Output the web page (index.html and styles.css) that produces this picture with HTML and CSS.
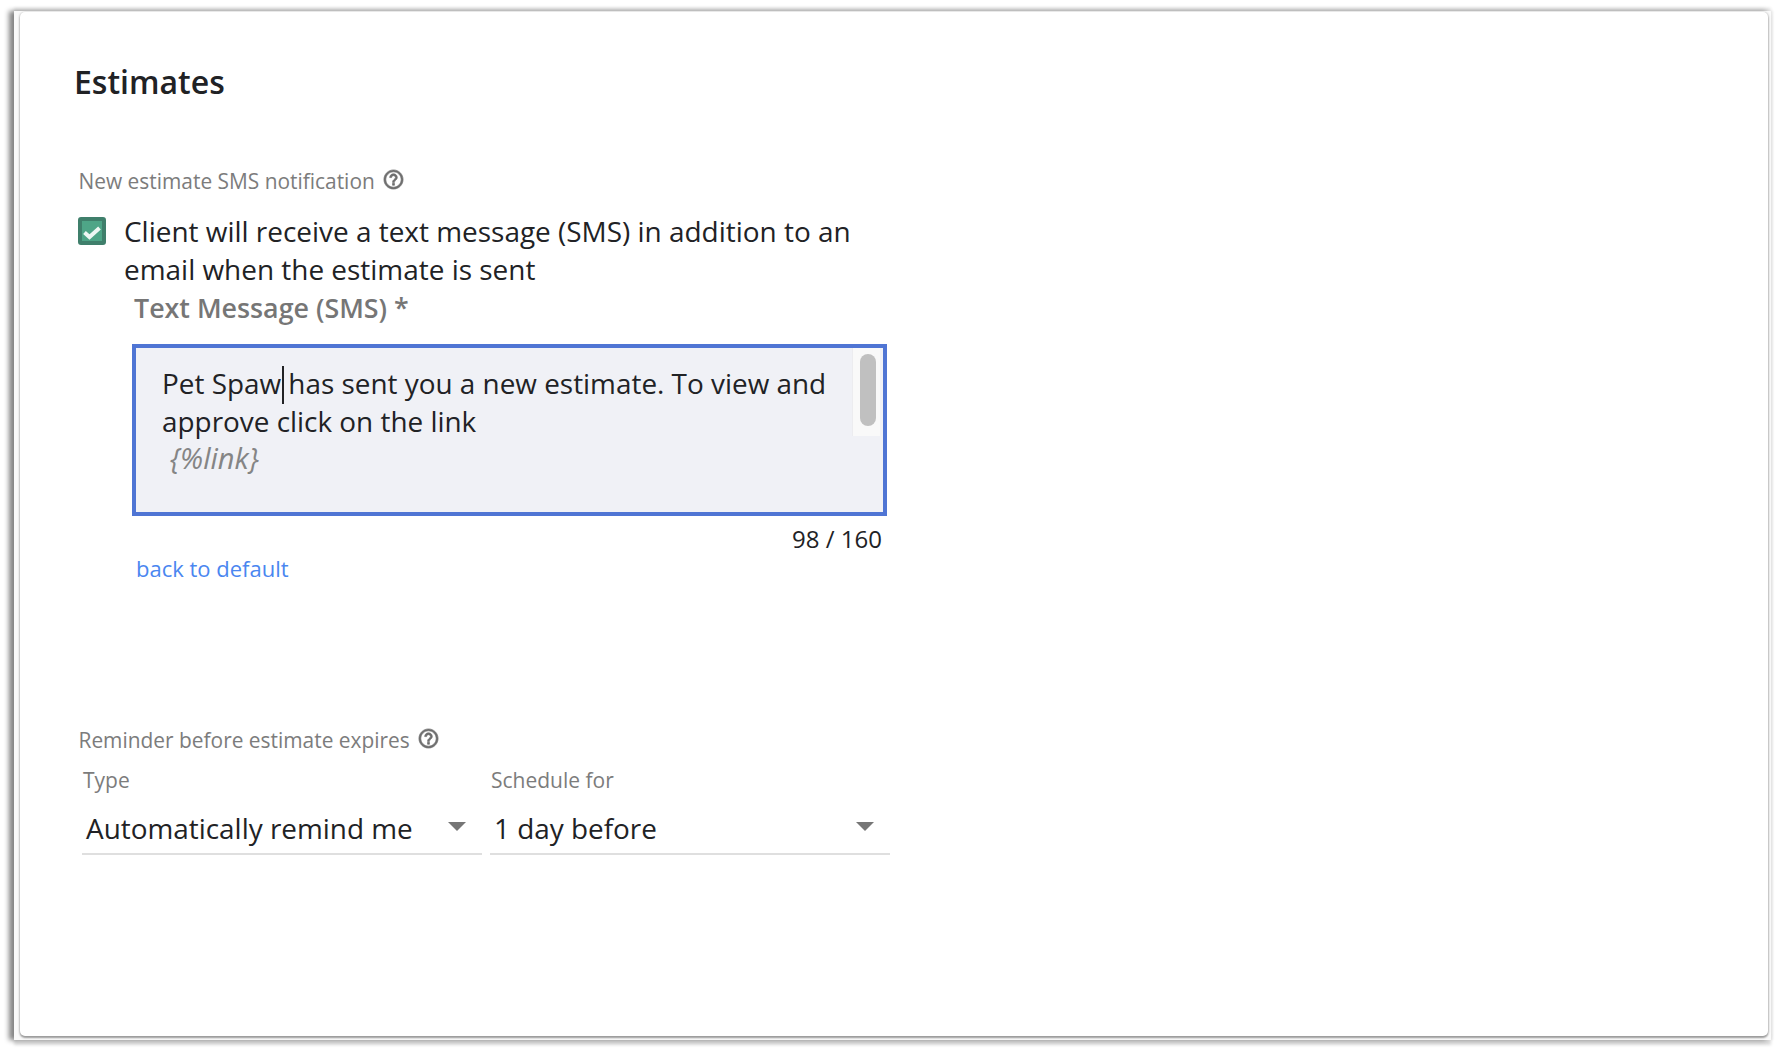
FILE: index.html
```html
<!DOCTYPE html>
<html lang="en">
<head>
<meta charset="utf-8">
<title>Estimates</title>
<link rel="stylesheet" href="styles.css">
</head>
<body>
<div class="frame">
  <main class="card">
    <h1 class="title">Estimates</h1>
    <div class="section-label">
      <span>New estimate SMS notification</span>
      <svg class="help" viewBox="0 0 24 24"><path d="M11 18h2v-2h-2v2zm1-16C6.48 2 2 6.48 2 12s4.48 10 10 10 10-4.48 10-10S17.52 2 12 2zm0 18c-4.41 0-8-3.59-8-8s3.59-8 8-8 8 3.59 8 8-3.59 8-8 8zm0-14c-2.21 0-4 1.79-4 4h2c0-1.1.9-2 2-2s2 .9 2 2c0 2-3 1.75-3 5h2c0-2.25 3-2.5 3-5 0-2.21-1.79-4-4-4z"/></svg>
    </div>
    <div class="check-row">
      <span class="checkbox">
        <svg viewBox="0 0 20 20"><path d="M2.5 11.5l5 4.5 10-9" /></svg>
      </span>
      <p class="check-text">Client will receive a text message (SMS) in addition to an email when the estimate is sent</p>
    </div>
    <div class="sms">
      <div class="sms-label">Text Message (SMS) *</div>
      <div class="textarea">
        <p class="textarea-text">Pet Spaw<span class="caret"></span> has sent you a new estimate. To view and approve click on the link</p>
        <p class="textarea-token">{%link}</p>
        <div class="scroll-track"><div class="scroll-thumb"></div></div>
      </div>
      <div class="counter">98 / 160</div>
      <a class="reset" href="#">back to default</a>
    </div>
    <div class="section-label reminder">
      <span>Reminder before estimate expires</span>
      <svg class="help" viewBox="0 0 24 24"><path d="M11 18h2v-2h-2v2zm1-16C6.48 2 2 6.48 2 12s4.48 10 10 10 10-4.48 10-10S17.52 2 12 2zm0 18c-4.41 0-8-3.59-8-8s3.59-8 8-8 8 3.59 8 8-3.59 8-8 8zm0-14c-2.21 0-4 1.79-4 4h2c0-1.1.9-2 2-2s2 .9 2 2c0 2-3 1.75-3 5h2c0-2.25 3-2.5 3-5 0-2.21-1.79-4-4-4z"/></svg>
    </div>
    <div class="selects">
      <div class="select">
        <div class="select-label">Type</div>
        <div class="select-value"><span>Automatically remind me</span><i class="arrow"></i></div>
      </div>
      <div class="select">
        <div class="select-label">Schedule for</div>
        <div class="select-value"><span>1 day before</span><i class="arrow"></i></div>
      </div>
    </div>
  </main>
</div>
</body>
</html>
```
FILE: styles.css
```css
* { box-sizing: border-box; }
html, body { margin: 0; height: 100%; }
body {
  background: #fff;
  padding: 11px 7px 8px 14px;
  font-family: "Open Sans", "Noto Sans", sans-serif;
  color: #212225;
  overflow: hidden;
}
.frame {
  height: 100%;
  padding: 1px 3px 4px 6px;
  background: #fafafa;
  box-shadow: -5px 0 5px #858585, 0 -3px 3px #e4e4e4, 0 5px 3px #dcdcdc, 2px 0 2px #ececec;
}
.card {
  height: 100%;
  background: #fff;
  border-radius: 5px;
  padding: 49px 0 0 55px;
  box-shadow: 0 2px 2px #9a9a9a, -1px 0 2px #d8d8d8, 1px 0 2px #d0d0d0;
}
.title {
  margin: 0 0 0 -1px;
  font-size: 32px;
  line-height: 42px;
  font-weight: 600;
}
.section-label {
  display: flex;
  align-items: center;
  gap: 7px;
  margin: 63px 0 0 3.5px;
  height: 30px;
  font-size: 20.9px;
  color: #7c7c7c;
}
.help {
  width: 23px;
  height: 23px;
  margin-top: -3px;
  fill: #6f6f6f;
  stroke: #6f6f6f;
  stroke-width: 0.7;
}
.check-row {
  display: flex;
  gap: 18px;
  margin: 16px 0 0 3px;
}
.checkbox {
  flex: none;
  width: 28px;
  height: 28px;
  margin-top: 5px;
  border-radius: 3px;
  border: 4px solid #3f7f6b;
  background: #4ea587;
  display: flex;
}
.checkbox svg { width: 100%; height: 100%; fill: none; stroke: #eef7f3; stroke-width: 4; }
.check-text {
  margin: 0;
  width: 750px;
  font-size: 27.95px;
  line-height: 38px;
}
.sms { margin: 1px 0 0 57px; width: 755px; }
.sms-label {
  margin-left: 2px;
  height: 38px;
  line-height: 38px;
  font-size: 26.8px;
  font-weight: 600;
  color: #767676;
}
.textarea {
  position: relative;
  height: 172px;
  margin-top: 17px;
  border: 4px solid #4f75d4;
  background: #f0f1f6;
  padding: 17px 20px 0 26px;
}
.textarea-text {
  margin: 0;
  font-size: 27.9px;
  line-height: 37.5px;
}
.caret {
  display: inline-block;
  width: 2px;
  height: 38px;
  margin: 0 -3px -4px 1px;
  vertical-align: -6px;
  background: #212225;
}
.textarea-token {
  margin: 0 0 0 8px;
  font-size: 29px;
  line-height: 36px;
  font-style: italic;
  color: #858585;
}
.scroll-track {
  position: absolute;
  top: 0;
  right: 3px;
  width: 28px;
  height: 88px;
  padding: 6px 4px 0 7px;
  background: #f9f9f9;
  border-left: 1px solid #ececef;
}
.scroll-thumb {
  width: 16px;
  height: 72px;
  border-radius: 8px;
  background: #c0c0c0;
}
.counter {
  margin-top: 9px;
  text-align: right;
  padding-right: 5px;
  font-size: 24px;
  line-height: 28px;
}
.reset {
  display: block;
  margin: 0 0 0 4px;
  font-size: 22px;
  line-height: 30px;
  color: #4a86f0;
  text-decoration: none;
}
.reminder { margin-top: 142px; }
.selects {
  display: grid;
  grid-template-columns: 400px 400px;
  gap: 8px;
  margin: 9px 0 0 7px;
}
.select-label {
  padding-left: 1px;
  font-size: 21px;
  line-height: 33px;
  color: #7c7c7c;
}
.select-value {
  position: relative;
  height: 58px;
  padding: 12px 0 0 4px;
  font-size: 27.9px;
  line-height: 38px;
  border-bottom: 2px solid #dfdfdf;
}
.arrow {
  position: absolute;
  right: 16px;
  top: 25px;
  width: 0;
  height: 0;
  border-left: 9px solid transparent;
  border-right: 9px solid transparent;
  border-top: 9px solid #767676;
}
```
